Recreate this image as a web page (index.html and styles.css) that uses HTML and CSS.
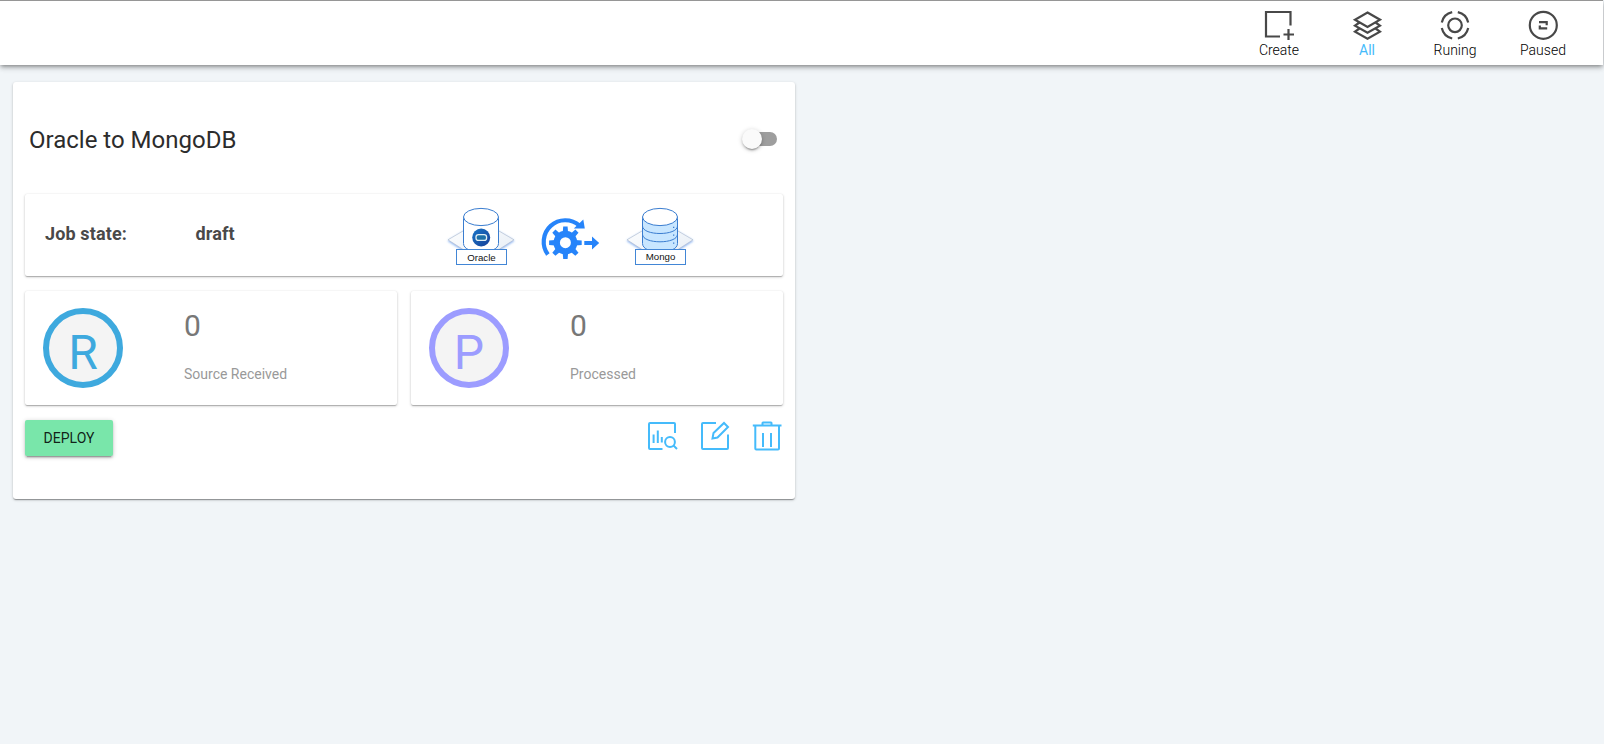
FILE: index.html
```html
<!DOCTYPE html>
<html lang="en">
<head>
<meta charset="utf-8">
<title>Jobs</title>
<link rel="stylesheet" href="styles.css">
</head>
<body>
<header class="topbar">
  <nav class="nav">
    <a class="nav-item">
      <svg class="nav-icon" viewBox="0 0 30 30"><path d="M26.500 15.500V2H2v24.500h14M19.500 24.500H30M24.500 19v11"/></svg>
      <span>Create</span>
    </a>
    <a class="nav-item active">
      <svg class="nav-icon" viewBox="0 0 30 30"><path d="M15.500 2.500L28 9.700 15.500 16.900 3 9.700ZM7.500 12.500L3 15.700l12.500 7L28 15.700l-4.500-3.200M7.500 18.500L3 21.700l12.500 7L28 21.700l-4.500-3.200"/></svg>
      <span>All</span>
    </a>
    <a class="nav-item">
      <svg class="nav-icon" viewBox="0 0 30 30"><circle cx="15" cy="15.300" r="6.800"/><path d="M17.800 2.100A13.500 13.500 0 0 1 28.200 12.500M28.200 18.100A13.500 13.500 0 0 1 17.800 28.500M12.200 28.500A13.500 13.500 0 0 1 1.800 18.100M1.800 12.500A13.500 13.500 0 0 1 12.200 2.100"/></svg>
      <span>Runing</span>
    </a>
    <a class="nav-item">
      <svg class="nav-icon" viewBox="0 0 30 30"><circle cx="15.300" cy="15.300" r="13.500"/><path d="M11 12.200h7.700v3M19.200 18.400h-7.400v-3"/></svg>
      <span>Paused</span>
    </a>
  </nav>
</header>
<main class="content">
  <section class="job-card">
    <div class="job-head">
      <h1 class="job-title">Oracle to MongoDB</h1>
      <span class="toggle"><span class="knob"></span></span>
    </div>
    <div class="panel state">
      <span class="state-label">Job state:</span>
      <span class="state-value">draft</span>
      <svg class="flow" viewBox="440 200 260 70">
        <defs>
          <linearGradient id="base" x2="1" y2="1"><stop offset="0" stop-color="#fff"/><stop offset="1" stop-color="#e6edf5"/></linearGradient>
          <linearGradient id="seal" x2="1" y2="1"><stop offset="0" stop-color="#1976c8"/><stop offset="1" stop-color="#173f98"/></linearGradient>
          <filter id="glow" x="-20%" y="-20%" width="140%" height="150%"><feDropShadow dx="0" dy="1" stdDeviation="1.300" flood-color="#3b82e8" flood-opacity=".65"/></filter>
        </defs>
        <path class="base" d="M448 239.800L481 220.500 514 239.800 481 261Z"/>
        <path class="drum" d="M463.500 217v26.500c0 11.400 35 11.400 35 0V217"/>
        <ellipse class="drum" cx="481" cy="217" rx="17.500" ry="8.600"/>
        <circle cx="481.200" cy="237.500" r="9" fill="url(#seal)"/>
        <rect x="476" y="234.600" width="10.600" height="5.800" rx="2.500" fill="#1d70a8" stroke="#e1eff4" stroke-width="1.300"/>
        <rect class="tag" x="456.500" y="249.500" width="50" height="15"/>
        <text class="tag-text" x="481.500" y="260.500">Oracle</text>

        <path class="sync-line" d="M547.900 254.600A21.570 21.570 0 0 1 579.500 225.600"/>
        <path class="sync-fill" d="M583.300 219.500l1.500 9-11 .1Z"/>
        <g transform="translate(565.400 242.700)">
          <circle r="8.700" fill="none" stroke="#2684fa" stroke-width="6.400"/>
          <path class="sync-fill" id="tooth" d="M-2.700-10l.5-6.300h4.400l.5 6.300Z"/>
          <use href="#tooth" transform="rotate(45)"/><use href="#tooth" transform="rotate(90)"/><use href="#tooth" transform="rotate(135)"/><use href="#tooth" transform="rotate(180)"/><use href="#tooth" transform="rotate(225)"/><use href="#tooth" transform="rotate(270)"/><use href="#tooth" transform="rotate(315)"/>
        </g>
        <path class="sync-fill" d="M584.300 241h7.700v-4.500l7.200 6.500-7.200 6.500V245h-7.700Z"/>

        <path class="base" d="M627 239.800L660 220.500 693 239.800 660 261Z"/>
        <path class="drum filled" d="M642.500 217v26.500c0 11.400 35 11.400 35 0V217"/>
        <path class="drum none" d="M642.500 226c0 10 35 10 35 0M642.500 234.300c0 10 35 10 35 0"/>
        <ellipse class="drum" cx="660" cy="217" rx="17.500" ry="8.600"/>
        <path class="dots" d="M673 227.300h1.300M673 235.200h1.300M673 243.200h1.300"/>
        <rect class="tag" x="635.500" y="249.500" width="50" height="15"/>
        <text class="tag-text" x="660.500" y="259.500">Mongo</text>
      </svg>
    </div>
    <div class="stats">
      <div class="panel stat">
        <div class="badge received">R</div>
        <div class="figures"><span class="count">0</span><span class="caption">Source Received</span></div>
      </div>
      <div class="panel stat">
        <div class="badge processed">P</div>
        <div class="figures"><span class="count">0</span><span class="caption">Processed</span></div>
      </div>
    </div>
    <div class="actions">
      <button class="deploy">DEPLOY</button>
      <div class="tools">
        <svg class="tool" viewBox="0 0 30 30"><path d="M27 13V4Q27 3 26 3H2Q1 3 1 4V28Q1 29 2 29H14.500M5.600 14.500v8.500M9.800 10.500V23M13.800 17v5.500"/><circle cx="22" cy="22" r="4.900"/><path d="M25.500 25.500l3.500 3.500"/></svg>
        <svg class="tool" viewBox="0 0 30 30"><path d="M16 3H3Q2 3 2 4V28Q2 29 3 29H27Q28 29 28 28V14.500"/><path d="M12.500 18.500l1-5.500L24 3l4 4L17.500 17.500Z"/></svg>
        <svg class="tool" viewBox="0 0 30 30"><path d="M.800 5.500h28.700M3.300 5.500V28.500Q3.300 29.500 4.300 29.500H26Q27 29.500 27 28.500V5.500M10.500 5V3q0-.5.500-.5h8q.5 0 .5.500V5M11 13v14M19 13v14"/></svg>
      </div>
    </div>
  </section>
</main>
</body>
</html>
```
FILE: styles.css
```css
* { box-sizing: border-box; }
body { margin: 0; min-height: 744px; background: #f1f5f8; font-family: Roboto, "Liberation Sans", sans-serif; color: rgba(0,0,0,.87); }
.topbar { width: 1603px; height: 65px; background: #fff; border-top: 1px solid #969696; box-shadow: 0 2px 4px -1px rgba(0,0,0,.4), 0 4px 5px rgba(0,0,0,.1), 0 1px 8px rgba(0,0,0,.08); display: flex; justify-content: flex-end; padding: 9px 16px 0 0; }
.nav { display: flex; }
.nav-item { width: 88px; display: flex; flex-direction: column; align-items: center; font-size: 14px; font-weight: 300; line-height: 20px; color: #000; }
.nav-icon { width: 30px; height: 30px; fill: none; stroke: #484848; stroke-width: 2.2; }
.nav-item.active { color: #45bbfb; font-weight: 400; }
.content { padding: 17px 13px; }
.job-card { width: 782px; height: 417px; padding: 0 12px; background: #fff; border-radius: 3px; box-shadow: 0 1px 3px rgba(0,0,0,.22), 0 1px 1px rgba(0,0,0,.14), 0 2px 1px -1px rgba(0,0,0,.2); }
.job-head { height: 112px; padding: 2px 5px 0 4px; display: flex; align-items: center; justify-content: space-between; }
.job-title { margin: 0; padding-top: 2px; font-size: 24px; font-weight: 400; line-height: 32px; color: #2c2c2c; }
.toggle { width: 35px; height: 14px; margin-right: 1px; border-radius: 7px; background: linear-gradient(to right, transparent 8px, #9e9e9e 8px); display: flex; align-items: center; }
.knob { width: 20px; height: 20px; flex: none; border-radius: 50%; background: #fafafa; box-shadow: 0 3px 1px -2px rgba(0,0,0,.2), 0 2px 2px rgba(0,0,0,.14), 0 1px 5px rgba(0,0,0,.2); }
.panel { background: #fff; border-radius: 2px; box-shadow: 0 1px 3px rgba(0,0,0,.2), 0 1px 1px rgba(0,0,0,.1), 0 2px 1px -1px rgba(0,0,0,.12), 0 0 1px rgba(0,0,0,.08); }
.state { height: 82px; padding-left: 20px; display: flex; align-items: center; font-size: 18px; font-weight: 700; letter-spacing: .13px; color: #494949; }
.state-label { width: 150.5px; padding-bottom: 4px; }
.state-value { width: 244.5px; padding-bottom: 4px; }
.flow { width: 260px; height: 70px; }
.base { fill: url(#base); stroke: #a9b9cb; stroke-width: .6; filter: url(#glow); }
.drum { fill: #fff; stroke: #3a7dd0; stroke-width: 1; }
.filled { fill: #c8e6ff; }
.none { fill: none; }
.dots { stroke: #3a7dd0; stroke-width: 1.2; }
.tag { fill: #fff; stroke: #4286d6; stroke-width: 1; }
.tag-text { font: 9.7px "Liberation Sans", Arial, sans-serif; letter-spacing: 0; fill: #111; text-anchor: middle; }
.sync-line { fill: none; stroke: #2684fa; stroke-width: 4.2; }
.sync-fill { fill: #2684fa; }
.stats { display: flex; gap: 14px; margin-top: 15px; }
.stat { flex: 1; height: 114px; padding: 17px 18px; display: flex; gap: 61px; }
.badge { width: 80px; height: 80px; border: 6px solid; border-radius: 50%; background: #f4f4f4; font-size: 48px; line-height: 77px; text-align: center; }
.received { color: #3ea9de; }
.processed { color: #9c9cff; }
.figures { display: flex; flex-direction: column; }
.count { font-size: 30px; line-height: 36px; color: #777; }
.caption { margin-top: 20px; font-size: 14px; line-height: 20px; color: #999; }
.actions { display: flex; justify-content: space-between; margin-top: 15px; }
.deploy { width: 88px; height: 36px; padding: 0; border: 0; border-radius: 2px; background: #79e6aa; box-shadow: 0 3px 1px -2px rgba(0,0,0,.2), 0 2px 2px rgba(0,0,0,.14), 0 1px 5px rgba(0,0,0,.2); font: 400 14px Roboto, sans-serif; color: rgba(0,0,0,.87); }
.tools { display: flex; gap: 22px; padding-right: 1px; }
.tool { width: 30px; height: 30px; overflow: visible; fill: none; stroke: #45bbfb; stroke-width: 2; }
```
